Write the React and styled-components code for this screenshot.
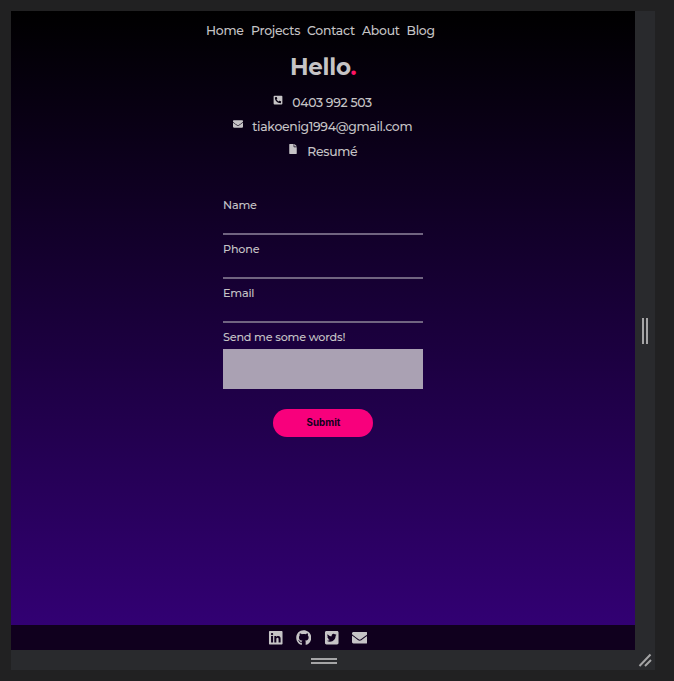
import React from "react";
import styled, { createGlobalStyle } from "styled-components";
import {
  FaPhoneSquareAlt,
  FaEnvelope,
  FaFile,
  FaLinkedin,
  FaGithub,
  FaTwitterSquare,
} from "react-icons/fa";

const GlobalStyle = createGlobalStyle`
  * { box-sizing: border-box; }
  body {
    margin: 0;
    background: #212122;
    font-family: "Montserrat", "Inter", sans-serif;
    font-weight: 500;
    color: #c6c4c6;
    overflow: hidden;
  }
`;

const Workspace = styled.div`
  height: 681px;
  padding: 11px;
`;

const Device = styled.div`
  display: grid;
  grid-template-columns: 624px 20px;
  grid-template-rows: 639px 20px;
  width: 644px;
  background: #292a2d;
`;

const Page = styled.div`
  display: flex;
  flex-direction: column;
  align-items: center;
  background: linear-gradient(#000 0%, #320073 100%);
  background-size: 100% 614px;
`;

const Nav = styled.nav`
  display: flex;
  gap: 7px;
  height: 40px;
  margin-right: 5px;
  padding-top: 10px;
`;

const NavLink = styled.a`
  width: ${(p) => p.$width}px;
  font-size: 12.4px;
  line-height: 19px;
  letter-spacing: -0.24px;
  white-space: nowrap;
`;

const Title = styled.h1`
  margin: 0;
  height: 32px;
  font-size: 23px;
  line-height: 32px;
  font-weight: 700;
  width: 66px;
  letter-spacing: -0.25px;
  white-space: nowrap;
`;

const Dot = styled.span`
  color: #ff1464;
`;

const ContactList = styled.div`
  display: flex;
  flex-direction: column;
  align-items: center;
  padding-top: 8px;
  height: 114px;
`;

const ContactRow = styled.div`
  display: flex;
  height: 24.4px;
  margin-right: 1px;
  gap: 9.5px;
  svg {
    display: block;
    height: 10px;
    width: auto;
    margin-top: 4px;
  }
`;

const ContactText = styled.span`
  width: ${(p) => p.$width}px;
  font-size: 12.4px;
  line-height: 23px;
  letter-spacing: -0.3px;
  white-space: nowrap;
`;

const Form = styled.form`
  display: flex;
  flex-direction: column;
  align-items: center;
  width: 200px;
`;

const Field = styled.label`
  display: flex;
  flex-direction: column;
  width: 200px;
  height: 44px;
  font-size: 11.2px;
  line-height: 16px;
  letter-spacing: -0.19px;
  white-space: nowrap;
`;

const Input = styled.input`
  width: 200px;
  height: 22px;
  margin-top: auto;
  margin-bottom: 6px;
  padding: 0;
  border: 0;
  border-bottom: 2px solid #706480;
  background: transparent;
  outline: none;
`;

const MessageField = styled(Field)`
  height: 80px;
`;

const Message = styled.textarea`
  width: 200px;
  height: 40px;
  margin-top: 4px;
  border: 0;
  background: #aaa1b3;
  outline: none;
  resize: none;
`;

const Submit = styled.button`
  width: 100px;
  height: 27.5px;
  padding: 0 0 0 1px;
  border: 0;
  border-radius: 14px;
  background: #f8007c;
  color: #10001c;
  font: 700 9.8px/27px "Inter", sans-serif;
`;

const Footer = styled.footer`
  display: flex;
  justify-content: center;
  align-items: center;
  gap: 12.5px;
  align-self: stretch;
  height: 25px;
  margin-top: auto;
  padding-right: 11px;
  background: #10001e;
  svg {
    display: block;
    height: 15.5px;
    width: auto;
  }
`;

const Handle = styled.div`
  display: flex;
  flex-direction: ${(p) => (p.$vertical ? "row" : "column")};
  align-items: center;
  justify-content: center;
  gap: 2px;
  padding-left: ${(p) => (p.$vertical ? 0 : 2)}px;
  padding-top: ${(p) => (p.$vertical ? 0 : 1)}px;
`;

const Grip = styled.span`
  width: ${(p) => (p.$vertical ? 2 : 26)}px;
  height: ${(p) => (p.$vertical ? 26 : 2)}px;
  background: #a5a5a6;
`;

const Corner = styled.div`
  svg {
    display: block;
  }
`;

const links = [
  ["Home", 38],
  ["Projects", 49],
  ["Contact", 48],
  ["About", 37.5],
  ["Blog", 28.5],
];

const fields = ["Name", "Phone", "Email"];

export default function App() {
  return (
    <Workspace>
      <GlobalStyle />
      <Device>
        <Page>
          <Nav>
            {links.map(([name, width]) => (
              <NavLink key={name} $width={width}>{name}</NavLink>
            ))}
          </Nav>
          <Title>Hello<Dot>.</Dot></Title>
          <ContactList>
            <ContactRow>
              <FaPhoneSquareAlt />
              <ContactText $width={80}>0403 992 503</ContactText>
            </ContactRow>
            <ContactRow>
              <FaEnvelope />
              <ContactText $width={160}>tiakoenig1994@gmail.com</ContactText>
            </ContactRow>
            <ContactRow>
              <FaFile />
              <ContactText $width={50}>Resumé</ContactText>
            </ContactRow>
          </ContactList>
          <Form>
            {fields.map((name) => (
              <Field key={name}>
                {name}
                <Input />
              </Field>
            ))}
            <MessageField>
              Send me some words!
              <Message />
            </MessageField>
            <Submit type="button">Submit</Submit>
          </Form>
          <Footer>
            <FaLinkedin />
            <FaGithub />
            <FaTwitterSquare />
            <FaEnvelope />
          </Footer>
        </Page>
        <Handle $vertical>
          <Grip $vertical />
          <Grip $vertical />
        </Handle>
        <Handle>
          <Grip />
          <Grip />
        </Handle>
        <Corner>
          <svg width="20" height="20" viewBox="0 0 20 20" stroke="#a5a5a6" strokeWidth="2">
            <path d="M4.5 16 15.5 4.5M10 16l6-6" />
          </svg>
        </Corner>
      </Device>
    </Workspace>
  );
}
